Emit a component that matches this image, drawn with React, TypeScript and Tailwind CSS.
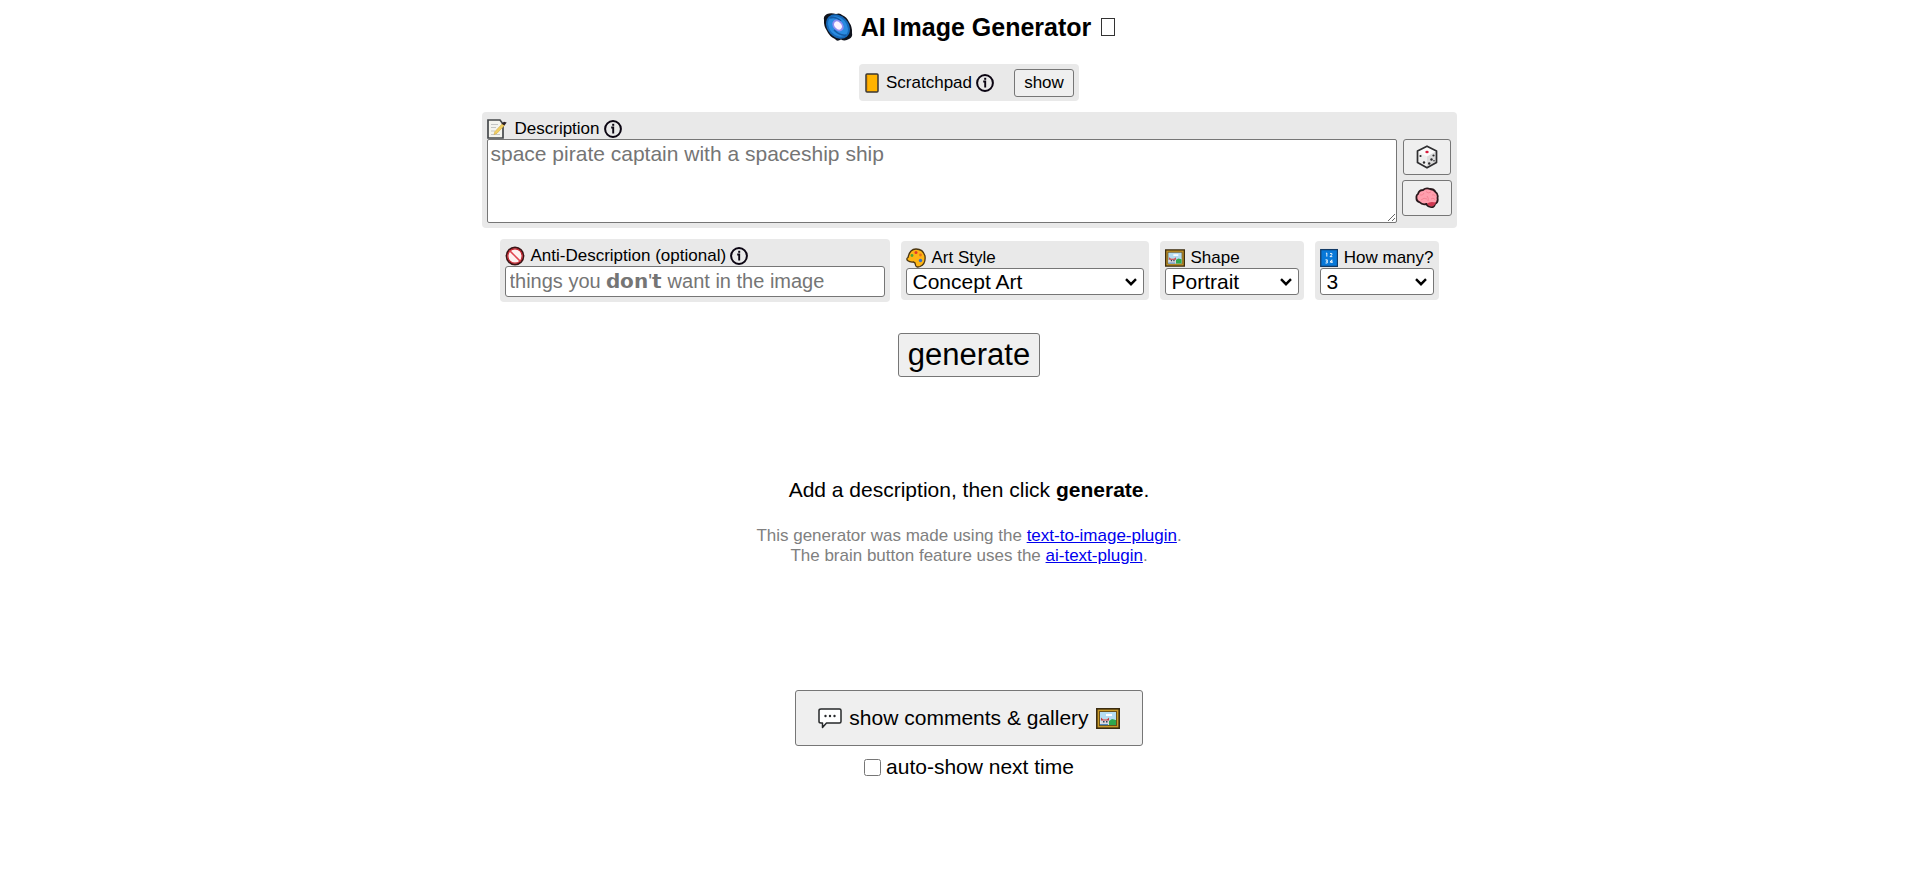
import React, { useState } from 'react';

interface IconProps {
  className?: string;
}

const GalaxyIcon: React.FC<IconProps> = ({ className }) => (
  <svg viewBox="0 0 30 30" className={className} aria-hidden="true">
    <path d="M4 2 Q8 .5 13 2 Q17 .5 19 3 Q24 5 26 10 Q29.500 15 29 21 Q30 25 26 27 Q22 29.500 18 27.500 Q14 30 12 27 Q6 24 4 19 Q.5 14 1 8 Q0 4 4 2Z" fill="#10131c" />
    <ellipse cx="15" cy="14.500" rx="13.500" ry="10.500" transform="rotate(48 15 14.500)" fill="#1668b8" />
    <ellipse cx="15" cy="14.500" rx="11.500" ry="8.500" transform="rotate(48 15 14.500)" fill="#2a8be0" />
    <path d="M7 6 Q13 4 18 9 M23 23 Q17 24 11 18" fill="none" stroke="#155aa5" strokeWidth="1.500" />
    <ellipse cx="15" cy="13.500" rx="6.500" ry="5" transform="rotate(48 15 13.500)" fill="#8f8df0" />
    <ellipse cx="15" cy="13.500" rx="4.500" ry="3.200" transform="rotate(48 15 13.500)" fill="#fdf3ff" />
  </svg>
);

const LedgerIcon: React.FC<IconProps> = ({ className }) => (
  <svg viewBox="0 0 14 20" className={className} aria-hidden="true">
    <rect x="1" y="1" width="12" height="18" rx="1" fill="#ffb300" stroke="#3a3632" strokeWidth="1.500" />
    <path d="M2.500 2.500v15" stroke="#f09a00" />
  </svg>
);

const InfoIcon: React.FC<IconProps> = ({ className }) => (
  <svg viewBox="0 0 18 18" className={className} role="img" aria-label="info">
    <circle cx="9" cy="9" r="7.900" fill="none" stroke="#0b0512" strokeWidth="2" />
    <path d="M7.200 7.500H9.200v6" fill="none" stroke="#0b0512" strokeWidth="1.900" />
    <rect x="8.200" y="3.800" width="2" height="2" fill="#0b0512" />
  </svg>
);

const MemoIcon: React.FC<IconProps> = ({ className }) => (
  <svg viewBox="0 0 20 20" className={className} aria-hidden="true">
    <path d="M1 1h12l3 4v14H1z" fill="#f4f4ee" stroke="#45484b" strokeWidth="1.700" />
    <path d="M4 5.500h7M4 8.500h5M4 12h4M4 15.500h9" stroke="#c3c5c4" strokeWidth="1.200" />
    <path d="M8 12.500l7.500-8 2 1.800-7.500 8-3 1.200z" fill="#f0cf63" stroke="#d1a83c" strokeWidth=".6" />
    <path d="M14.500 4.800l2.500-2 2.700.6-2.300 3.200z" fill="#2c2024" />
  </svg>
);

const DieIcon: React.FC<IconProps> = ({ className }) => (
  <svg viewBox="0 0 22 24" className={className} aria-hidden="true">
    <path d="M11 1.200L20.500 6v11.500L11 22.800 1.500 17.500V6z" fill="#fafafa" />
    <path d="M11 11.500L20.500 6v11.500L11 22.800z" fill="#dcdcdc" />
    <path d="M1.500 6.500L11 11.500V22.800L1.500 17.500z" fill="#efefef" />
    <path d="M11 1.200L20.500 6v11.500L11 22.800 1.500 17.500V6z" fill="none" stroke="#2e2e30" strokeWidth="1.700" strokeLinejoin="round" />
    <ellipse cx="11" cy="7" rx="1.700" ry="1.300" fill="#d81b3c" />
    <g fill="#2e2e30">
      <circle cx="4.500" cy="11" r="1.100" />
      <circle cx="8" cy="17.500" r="1.200" />
      <circle cx="17.500" cy="10.500" r="1.100" />
      <circle cx="15.500" cy="14.500" r="1.200" />
      <circle cx="13.200" cy="18.500" r="1.200" />
      <circle cx="18" cy="15.800" r=".8" />
    </g>
  </svg>
);

const BrainIcon: React.FC<IconProps> = ({ className }) => (
  <svg viewBox="0 0 24 22" className={className} aria-hidden="true">
    <path d="M3 7Q4 3 8 3Q11 .5 15 2Q19 2 20.500 5Q23.500 7 22.500 11Q23.500 15 20 17Q19 21 15.500 20Q12 19 11.500 17Q7 18 5 15.500Q1 14 1.500 11Q1 8 3 7Z" fill="#ff9fae" stroke="#2a181c" strokeWidth="1.800" />
    <path d="M12 16.500Q15 14 21 15.500Q19 20 15.500 19.200Q12.500 18.500 12 16.500Z" fill="#cf3850" />
    <path d="M5 8Q8 9 9 6M11 4.500Q13 7 16 5M17 8Q19 7 20.500 9M6 13Q9 10 12 12M12 9Q14 11 13 14M16 12Q18 10 20 12.500" fill="none" stroke="#f58494" strokeWidth="1" />
  </svg>
);

const ProhibitedIcon: React.FC<IconProps> = ({ className }) => (
  <svg viewBox="0 0 20 20" className={className} aria-hidden="true">
    <circle cx="10" cy="10" r="8.500" fill="#fdf0f0" stroke="#3b1416" strokeWidth="1.800" />
    <circle cx="10" cy="10" r="7.200" fill="none" stroke="#c4202a" strokeWidth="1.300" />
    <path d="M4.600 4.600l10.800 10.800" stroke="#e04550" strokeWidth="1.500" />
  </svg>
);

const PaletteIcon: React.FC<IconProps> = ({ className }) => (
  <svg viewBox="0 0 20 20" className={className} aria-hidden="true">
    <path d="M10 1Q17 1 19 8Q20 16 14 18.500Q10 20 9.500 17Q9.500 14.500 7.500 14Q4 14.500 1.500 12.500Q0 10.500 2 9.500Q3 5 5 3Q7 1 10 1Z" fill="#fdb515" stroke="#4a3410" strokeWidth="1.300" />
    <circle cx="10" cy="4.500" r="1.500" fill="#e03a2c" />
    <circle cx="6" cy="7.500" r="1.400" fill="#4aa63c" />
    <circle cx="14.500" cy="7" r="1.400" fill="#e8731c" />
    <circle cx="14.500" cy="12.500" r="1.700" fill="#3c6fc4" />
  </svg>
);

const FrameIcon: React.FC<IconProps> = ({ className }) => (
  <svg viewBox="0 0 24 21" className={className} aria-hidden="true">
    <rect x=".8" y=".8" width="22.400" height="19.400" fill="#c99a28" stroke="#3b2c10" strokeWidth="1.600" />
    <rect x="3.500" y="3.500" width="17" height="14" fill="#b4dcf2" stroke="#6b5118" />
    <path d="M10 6h6v2h-6z" fill="#fff" />
    <path d="M4 13l5-1 5 2 6-3v6H4z" fill="#dfe6ea" />
    <path d="M13 17v-4l3-2 4 1v5z" fill="#2fa84f" />
    <path d="M5 17V9.500l2 1.300h4l2-1.300V17z" fill="#d8d8de" />
    <path d="M5 9.500l2 2h4l2-2v3H5z" fill="#c03a40" />
    <path d="M7 13h1.500v1.500H7zM10 13h1.500v1.500H10z" fill="#2c3a55" />
    <path d="M4 16h8v1.200H4z" fill="#5088bf" />
  </svg>
);

const NumbersIcon: React.FC<IconProps> = ({ className }) => (
  <svg viewBox="0 0 20 20" className={className} aria-hidden="true">
    <rect x=".8" y=".8" width="18.400" height="18.400" fill="#0878d8" stroke="#123a66" strokeWidth="1.400" />
    <g fill="none" stroke="#fff" strokeWidth="1">
      <path d="M6.500 5l1-.5v4M11 5h2v1.500l-2 2h2.500" />
      <path d="M6 12h2v1.500H6.500M8 13.500V15.500H6M13 15.500V12l-2 2.500h3" />
    </g>
  </svg>
);

const SpeechIcon: React.FC<IconProps> = ({ className }) => (
  <svg viewBox="0 0 24 21" className={className} aria-hidden="true">
    <path d="M3 1h18.500Q23 1 23 2.500v11Q23 15 21.500 15H8.500L4.500 19.500V15H3Q1 15 1 13.500v-11Q1 1 3 1Z" fill="#fff" stroke="#26282a" strokeWidth="1.500" strokeLinejoin="round" />
    <g fill="#26282a">
      <circle cx="7.500" cy="8" r="1.200" />
      <circle cx="12" cy="8" r="1.200" />
      <circle cx="16.500" cy="8" r="1.200" />
    </g>
  </svg>
);

interface SelectFieldProps {
  id: string;
  label: string;
  icon: React.ReactNode;
  options: string[];
  className: string;
}

const SelectField: React.FC<SelectFieldProps> = ({ id, label, icon, options, className }) => {
  const [value, setValue] = useState(options[0]);

  return (
    <div className={`rounded bg-[#e9e9e9] p-[5px] ${className}`}>
      <label htmlFor={id} className="flex h-[22px] items-center gap-1.5 whitespace-nowrap pt-px text-[17px]">
        {icon}
        {label}
      </label>
      <div className="relative">
        <select
          id={id}
          value={value}
          onChange={(e) => setValue(e.target.value)}
          className="block h-[27px] w-full appearance-none rounded-[3px] border border-[#767676] bg-white pl-1.5 text-[21px] leading-6"
        >
          {options.map(option => (
            <option key={option}>{option}</option>
          ))}
        </select>
        <svg viewBox="0 0 12 8" className="pointer-events-none absolute right-[7px] top-2.5 h-2 w-3" aria-hidden="true">
          <path d="M1 1.200l5 5 5-5" fill="none" stroke="#000" strokeWidth="2.400" />
        </svg>
      </div>
    </div>
  );
};

export default function App() {
  const [description, setDescription] = useState('');
  const [antiDescription, setAntiDescription] = useState('');
  const [autoShow, setAutoShow] = useState(false);

  return (
    <main className="flex flex-col items-center bg-white pl-[18px] pt-[11px] font-['Liberation_Sans',Arial,sans-serif] text-[21px] leading-6 text-black">
      <h1 className="flex h-8 items-center gap-2 text-[25px] font-bold">
        <GalaxyIcon className="h-[30px] w-[30px]" />
        AI Image Generator
        <span className="ml-0.5 h-[18px] w-3.5 border border-[#333]" />
      </h1>

      <div className="mt-[21px] flex h-[37px] items-center rounded bg-[#e9e9e9] pl-1.5 pr-[5px] text-[17px]">
        <LedgerIcon className="mr-[7px] h-5 w-3.5" />
        Scratchpad
        <InfoIcon className="ml-1 mr-5 h-[18px] w-[18px]" />
        <button className="h-7 w-[60px] rounded-[3px] border border-[#767676] bg-[#efefef] leading-5">show</button>
      </div>

      <div className="mt-[11px] w-full max-w-[975px] rounded bg-[#e9e9e9] p-[5px]">
        <label htmlFor="description" className="flex h-[22px] items-center pt-0.5 text-[17px]">
          <MemoIcon className="mr-2 h-5 w-5" />
          Description
          <InfoIcon className="ml-1 h-[18px] w-[18px]" />
        </label>
        <div className="flex gap-[5px]">
          <textarea
            id="description"
            value={description}
            onChange={(e) => setDescription(e.target.value)}
            placeholder="space pirate captain with a spaceship ship"
            className="block h-[84px] min-w-0 flex-1 rounded-[2px] border border-[#767676] bg-white px-[3px] py-0.5 placeholder:text-[#757575]"
          />
          <div className="flex flex-col items-center gap-[5px]">
            <button aria-label="random description" className="flex h-9 w-12 items-center justify-center rounded-[3px] border border-[#767676] bg-[#efefef]">
              <DieIcon className="h-6 w-[22px]" />
            </button>
            <button aria-label="improve description" className="flex h-9 w-[50px] items-center justify-center rounded-[3px] border border-[#767676] bg-[#efefef]">
              <BrainIcon className="h-[22px] w-6" />
            </button>
          </div>
        </div>
      </div>

      <div className="mt-[11px] flex flex-wrap items-center justify-center gap-[11px]">
        <div className="w-[390px] rounded bg-[#e9e9e9] p-[5px]">
          <label htmlFor="anti" className="flex h-[22px] items-center pt-px text-[17px]">
            <ProhibitedIcon className="mr-1.5 h-5 w-5" />
            Anti-Description (optional)
            <InfoIcon className="ml-1 h-[18px] w-[18px]" />
          </label>
          <input
            id="anti"
            type="text"
            value={antiDescription}
            onChange={(e) => setAntiDescription(e.target.value)}
            placeholder="things you 𝗱𝗼𝗻'𝘁 want in the image"
            className="block h-[31px] w-full rounded-[3px] border border-[#767676] bg-white px-1 text-[20px] placeholder:text-[#757575]"
          />
        </div>
        <SelectField
          id="style"
          label="Art Style"
          icon={<PaletteIcon className="h-5 w-5" />}
          options={['Concept Art']}
          className="w-[248px]"
        />
        <SelectField
          id="shape"
          label="Shape"
          icon={<FrameIcon className="h-[18px] w-5" />}
          options={['Portrait']}
          className="w-[144px]"
        />
        <SelectField
          id="count"
          label="How many?"
          icon={<NumbersIcon className="h-5 w-5" />}
          options={['3']}
          className="w-[124px]"
        />
      </div>

      <button className="mt-[31px] h-11 rounded-[3px] border border-[#767676] bg-[#efefef] px-[9px] text-[31px] leading-9">
        generate
      </button>

      <p className="mt-[101px]">
        Add a description, then click <b>generate</b>.
      </p>
      <p className="mt-6 text-center text-[17px] leading-5 text-[#808080]">
        This generator was made using the <a href="#text-to-image-plugin" className="text-[#0000ee] underline">text-to-image-plugin</a>.
        <br />
        The brain button feature uses the <a href="#ai-text-plugin" className="text-[#0000ee] underline">ai-text-plugin</a>.
      </p>

      <button className="mt-[124px] flex h-14 items-center gap-[7px] rounded-[3px] border border-[#767676] bg-[#efefef] px-[22px]">
        <SpeechIcon className="h-[21px] w-6" />
        show comments &amp; gallery
        <FrameIcon className="h-[21px] w-6" />
      </button>
      <label className="mt-[9px] flex items-center gap-[5px]">
        <input
          type="checkbox"
          checked={autoShow}
          onChange={(e) => setAutoShow(e.target.checked)}
          className="h-[17px] w-[17px]"
        />
        auto-show next time
      </label>
    </main>
  );
}
